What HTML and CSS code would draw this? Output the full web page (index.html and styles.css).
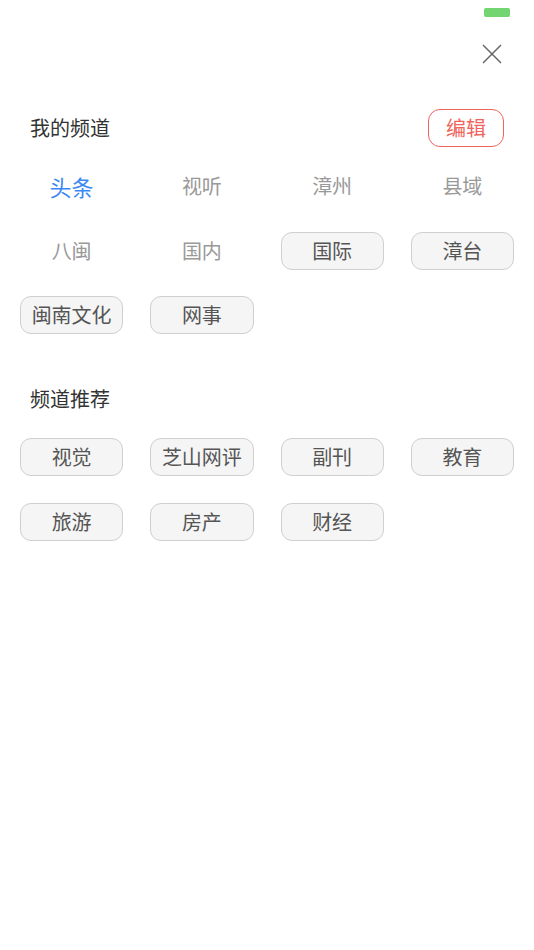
FILE: index.html
```html
<!DOCTYPE html>
<html lang="zh-CN">
<head>
  <meta charset="utf-8">
  <meta name="viewport" content="width=device-width, initial-scale=1">
  <title>频道管理</title>
  <link rel="stylesheet" href="styles.css">
</head>
<body>

  <div class="status">
    <span class="battery"></span>
  </div>

  <div class="toolbar">
    <button class="close" aria-label="关闭">
      <svg width="20" height="20" viewBox="0 0 20 20">
        <path d="M1 1 L19 19 M19 1 L1 19" stroke="#666" stroke-width="1.5" fill="none"/>
      </svg>
    </button>
  </div>

  <main class="channels">
    <div class="section-head">
      <h2>我的频道</h2>
      <button class="edit">编辑</button>
    </div>
    <ul class="grid">
      <li class="chip current">头条</li>
      <li class="chip fixed">视听</li>
      <li class="chip fixed">漳州</li>
      <li class="chip fixed">县域</li>
      <li class="chip fixed">八闽</li>
      <li class="chip fixed">国内</li>
      <li class="chip">国际</li>
      <li class="chip">漳台</li>
      <li class="chip">闽南文化</li>
      <li class="chip">网事</li>
    </ul>

    <div class="section-head more">
      <h2>频道推荐</h2>
    </div>
    <ul class="grid">
      <li class="chip">视觉</li>
      <li class="chip">芝山网评</li>
      <li class="chip">副刊</li>
      <li class="chip">教育</li>
      <li class="chip">旅游</li>
      <li class="chip">房产</li>
      <li class="chip">财经</li>
    </ul>
  </main>

</body>
</html>
```

FILE: styles.css
```css
* {
  margin: 0;
  padding: 0;
  box-sizing: border-box;
}

:root {
  --text: #333;
  --muted: #999;
  --chip-text: #555;
  --chip-bg: #f5f5f5;
  --chip-border: #cfcfcf;
  --blue: #3b88f5;
  --red: #f0645c;
  --green: #72d572;
}

html {
  font-family: "Noto Sans CJK SC", "Noto Sans", sans-serif;
  font-size: 20px;
  line-height: 1.2;
}

body {
  width: 534px;
  min-height: 950px;
  background: #fff;
  color: var(--text);
}

button {
  font: inherit;
  background: none;
  border: 0;
  cursor: pointer;
}

.status {
  display: flex;
  justify-content: flex-end;
  height: 44px;
  padding: 8px 24px 0 0;
}
.battery {
  width: 26px;
  height: 9px;
  border-radius: 2px;
  background: var(--green);
}

.toolbar {
  display: flex;
  justify-content: flex-end;
  padding-right: 32px;
}
.close {
  display: block;
  width: 20px;
  height: 20px;
}
.close svg {
  display: block;
}

.channels {
  padding-top: 45px;
}

.section-head {
  display: flex;
  align-items: center;
  justify-content: space-between;
  height: 38px;
  padding: 0 30px;
}
.section-head h2 {
  font-size: 20px;
  font-weight: 400;
  color: var(--text);
}
.section-head.more {
  margin-top: 46px;
}

.edit {
  width: 76px;
  height: 38px;
  border: 1.5px solid var(--red);
  border-radius: 12px;
  color: var(--red);
  font-size: 20px;
}

.grid {
  list-style: none;
  display: grid;
  grid-template-columns: repeat(4, 1fr);
  column-gap: 27px;
  row-gap: 26.5px;
  margin-top: 20px;
  padding: 0 20px;
}

.chip {
  display: flex;
  align-items: center;
  justify-content: center;
  height: 38px;
  border: 1.5px solid var(--chip-border);
  border-radius: 11px;
  background: var(--chip-bg);
  color: var(--chip-text);
  font-size: 20px;
}
.chip.fixed,
.chip.current {
  border-color: transparent;
  background: none;
  color: var(--muted);
}
.chip.current {
  color: var(--blue);
  font-size: 22px;
}
```
